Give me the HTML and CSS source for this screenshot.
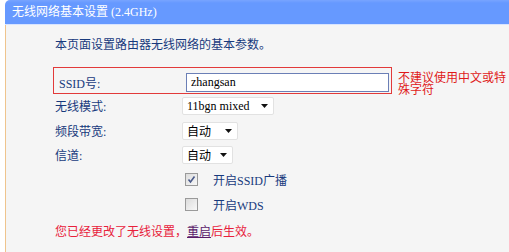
FILE: index.html
```html
<!DOCTYPE html>
<html lang="zh-CN">
<head>
    <meta charset="UTF-8">
    <title>无线网络基本设置</title>
    <link rel="stylesheet" href="styles.css">
</head>
<body>
    <div class="panel">
        <div class="panel-title">无线网络基本设置 (2.4GHz)</div>
        <div class="panel-body">
            <p class="intro">本页面设置路由器无线网络的基本参数。</p>

            <!-- SSID -->
            <div class="ssid-row">
                <div class="ssid-box">
                    <label class="label ssid-label" for="ssid">SSID号:</label>
                    <input class="text-input" id="ssid" type="text" value="zhangsan">
                </div>
                <div class="tip">不建议使用中文或特殊字符</div>
            </div>

            <div class="row row-24">
                <span class="label">无线模式:</span>
                <div class="select select-mode">
                    <span>11bgn mixed</span>
                    <svg class="arrow" width="7" height="4" viewBox="0 0 7 4"><path d="M0 0H7L3.5 4Z" fill="#111"/></svg>
                </div>
            </div>
            <div class="row row-25">
                <span class="label">频段带宽:</span>
                <div class="select select-band">
                    <span>自动</span>
                    <svg class="arrow" width="7" height="4" viewBox="0 0 7 4"><path d="M0 0H7L3.5 4Z" fill="#111"/></svg>
                </div>
            </div>
            <div class="row row-24">
                <span class="label">信道:</span>
                <div class="select select-channel">
                    <span>自动</span>
                    <svg class="arrow" width="7" height="4" viewBox="0 0 7 4"><path d="M0 0H7L3.5 4Z" fill="#111"/></svg>
                </div>
            </div>

            <!-- Options -->
            <div class="row row-25">
                <span class="label"></span>
                <span class="checkbox">
                    <svg width="11" height="11" viewBox="0 0 11 11"><path d="M2.5 5.5L4.5 8L8.5 2.5" fill="none" stroke="#4a5a8a" stroke-width="1.6"/></svg>
                </span>
                <span class="check-text">开启SSID广播</span>
            </div>
            <div class="row row-25">
                <span class="label"></span>
                <span class="checkbox"></span>
                <span class="check-text">开启WDS</span>
            </div>

            <p class="warn">您已经更改了无线设置，<a class="reboot" href="#">重启</a>后生效。</p>
        </div>
    </div>
</body>
</html>
```

FILE: styles.css
```css
/* General */
body {
    margin: 0;
    background-color: #ffffff;
    font-family: "Liberation Serif", "Noto Sans CJK SC", serif;
    font-size: 12px;
    color: #183a7d;
}

/* Panel */
.panel {
    margin-left: 5px;
    height: 252px;
    display: flex;
    flex-direction: column;
}

.panel-title {
    height: 25px;
    line-height: 25px;
    padding-left: 7px;
    background: linear-gradient(#78a4ff 0, #6699ff 3px, #6699ff 100%);
    border-radius: 5px 0 0 0;
    color: #ffffff;
    border-bottom: 1px solid #d8e4ff;
    box-sizing: border-box;
}

.panel-body {
    flex: 1;
    background-color: #f5f5f5;
    border-left: 1px solid #efc48d;
    padding-left: 49px;
}

.intro {
    margin: 12px 0 0;
    line-height: 16px;
}

/* SSID row */
.ssid-row {
    display: flex;
    align-items: flex-start;
    height: 27px;
    margin-top: 14px;
}

.ssid-box {
    display: flex;
    align-items: center;
    margin-left: -2px;
    padding: 5px 2px 1px 5px;
    border: 1px solid #e23a3a;
}

.ssid-label {
    width: 123px;
}

.text-input {
    box-sizing: border-box;
    width: 203px;
    height: 19px;
    margin: 0;
    padding: 0 4px;
    border: 1px solid #6b7fb6;
    background: #ffffff;
    font-family: "Liberation Serif", serif;
    font-size: 12px;
    color: #000000;
    outline: none;
}

.tip {
    width: 110px;
    margin: 5px 0 0 6px;
    line-height: 12px;
    color: #e01a1a;
}

/* Rows */
.row {
    display: flex;
    align-items: center;
}

.row-24 {
    height: 24px;
}

.row-25 {
    height: 25px;
}

.label {
    width: 127px;
    flex-shrink: 0;
}

/* Select boxes */
.select {
    box-sizing: border-box;
    height: 18px;
    display: flex;
    align-items: center;
    justify-content: space-between;
    padding: 0 5px 0 4px;
    background-color: #ffffff;
    border: 1px solid #e2e2e2;
    border-radius: 2px;
    color: #000000;
}

.select-mode {
    width: 92px;
}

.select-band {
    width: 56px;
}

.select-channel {
    width: 51px;
}

/* Checkboxes */
.checkbox {
    box-sizing: border-box;
    width: 13px;
    height: 13px;
    margin-left: 3px;
    display: flex;
    align-items: center;
    justify-content: center;
    border: 1px solid #9a9a9a;
    background: linear-gradient(135deg, #dcdcdc, #f8f8f8);
}

.check-text {
    margin-left: 15px;
}

/* Warning */
.warn {
    margin: 7px 0 0;
    line-height: 16px;
    color: #e8213b;
}

.reboot {
    color: #5a1a6a;
    text-decoration: underline;
}
```
